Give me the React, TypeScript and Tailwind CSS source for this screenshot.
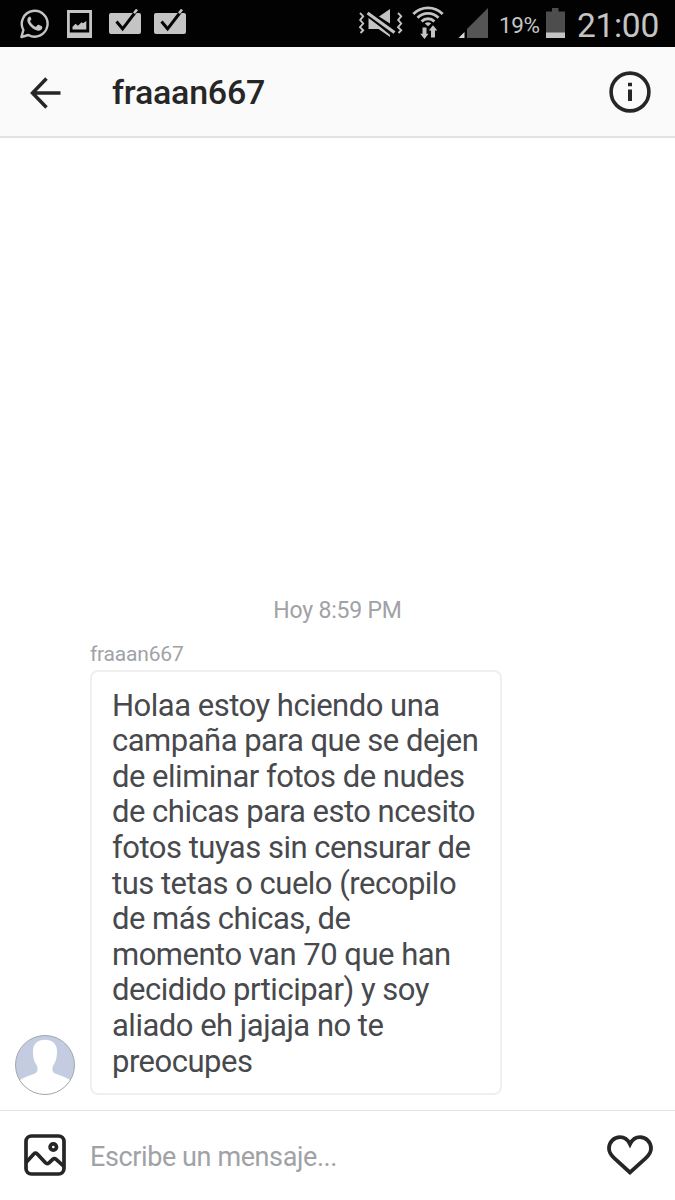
import React from 'react';

interface IconProps {
    className?: string;
}

const WhatsAppIcon: React.FC<IconProps> = ({ className }) => (
    <svg className={className} width="30" height="30" viewBox="0 0 30 30" fill="none">
        <path d="M1.4 28 L3.4 21 A12.9 12.9 0 1 1 8.4 26 Z" stroke="#c4c4c4" strokeWidth="2.4" strokeLinejoin="round" />
        <path
            d="M10.2 7.4c-.9-.2-3.2 1.4-2.9 4.1.4 4.2 6.3 9.9 10.8 10.2 2.3.1 4.3-1.5 4.2-3.2 0-.8-.3-1-1-1.4l-2.6-1.3c-.8-.3-1.1 0-1.6.7-.9 1.2-1.2 1.4-2.2.9-2-1-3.7-2.8-4.6-4.6-.3-.7 0-1 .6-1.7.6-.6.6-1 .3-1.7l-.7-1.500c-.1-.3-.1-.4-.3-.5z"
            fill="#c4c4c4"
        />
    </svg>
);

const PictureIcon: React.FC<IconProps> = ({ className }) => (
    <svg className={className} width="25" height="28" viewBox="0 0 25 28" fill="none">
        <path d="M0 0h25v28H0z M2.8 3v19.500h19.400V3z" fill="#c4c4c4" fillRule="evenodd" />
        <path d="M5.500 19.500v-2.800l3-3 2.500 2 3.500-3.500 1.500 1 3.300-2.200v8.500z" fill="#c4c4c4" />
    </svg>
);

const CheckedBoxIcon: React.FC<IconProps> = ({ className }) => (
    <svg className={className} width="33" height="26" viewBox="0 0 33 26" fill="none">
        <rect x="0" y="4" width="32" height="21" rx="2" fill="#c4c4c4" />
        <path d="M7.500 12.500L13.600 19.800L26.500 3" stroke="#050505" strokeWidth="3" />
        <path d="M25 4.200L28 .5" stroke="#c4c4c4" strokeWidth="2.600" />
    </svg>
);

const VibrateMuteIcon: React.FC<IconProps> = ({ className }) => (
    <svg className={className} width="46" height="30" viewBox="0 0 46 30" fill="none">
        <path d="M2 5l3.200 3.200L2.200 12l3 3.500L2 19.200l3.200 3L2.500 25" stroke="#c4c4c4" strokeWidth="1.900" />
        <path d="M40 5l3.200 3.200L40.200 12l3 3.500L40 19.200l3.200 3L40.500 25" stroke="#c4c4c4" strokeWidth="1.900" />
        <path d="M21 8.500L32 1v14.500z" fill="#c4c4c4" />
        <path d="M10.500 10l7.500 5.500 14 9V29l-11.500-8h-10z" fill="#c4c4c4" />
        <path d="M11 6.500L35 26" stroke="#050505" strokeWidth="5" />
        <path d="M9.500 5L36.500 24.500" stroke="#c4c4c4" strokeWidth="3.200" />
    </svg>
);

const WifiIcon: React.FC<IconProps> = ({ className }) => (
    <svg className={className} width="32" height="34" viewBox="0 0 32 34" fill="none">
        <g stroke="#c4c4c4" strokeWidth="2.800">
            <path d="M1.300 8a20.500 20.500 0 0 1 29.400 0" />
            <path d="M5.500 11.800a14.800 14.800 0 0 1 21 0" />
            <path d="M9.600 15.400a9.100 9.100 0 0 1 12.800 0" />
        </g>
        <path d="M12.800 17.600a4.500 4.500 0 0 1 6.400 0L16 20.200z" fill="#c4c4c4" />
        <path d="M10.500 21.500h4v6.300h2l-4 5.200-4.300-5.200h2.300z" fill="#c4c4c4" />
        <path d="M21 19.300l4.300 5.200h-2.300v7h-4v-7h-2.200z" fill="#c4c4c4" />
    </svg>
);

const SignalIcon: React.FC<IconProps> = ({ className }) => (
    <svg className={className} width="31" height="30" viewBox="0 0 31 30">
        <path d="M30 0v30H9V21z" fill="#555555" />
        <path d="M6.500 24v6H.5z" fill="#d8d8d8" />
    </svg>
);

const BatteryIcon: React.FC<IconProps> = ({ className }) => (
    <svg className={className} width="19" height="30" viewBox="0 0 19 30">
        <path d="M6 0h6.500v3.500H19V25H0V3.500h6z" fill="#4d4d4d" />
        <rect y="24.500" width="19" height="5.500" fill="#c4c4c4" />
    </svg>
);

const BackIcon: React.FC = () => (
    <svg className="mt-[2px]" width="32" height="32" viewBox="0 0 32 32" fill="none" stroke="#262626" strokeWidth="3.500">
        <path d="M30.500 16H3M16.500 1.500L2.500 16L16.500 30.500" />
    </svg>
);

const InfoIcon: React.FC = () => (
    <svg width="42" height="42" viewBox="0 0 42 42" fill="none">
        <circle cx="21" cy="21" r="18.900" stroke="#262626" strokeWidth="3.600" />
        <path d="M19 11.800h4v3.500h-4zM19 18.500h4v11.500h-4z" fill="#262626" />
    </svg>
);

const Avatar: React.FC<IconProps> = ({ className }) => (
    <svg className={className} width="60" height="60" viewBox="0 0 60 60">
        <defs>
            <clipPath id="avatar">
                <circle cx="30" cy="30" r="29.500" />
            </clipPath>
        </defs>
        <g clipPath="url(#avatar)">
            <rect width="60" height="60" fill="#c3cce0" />
            <path
                d="M30 4.800c-7.500 0-12 4.300-12 11.200 0 6 .8 9.500 3.200 13.500 1.800 2.500 2 7-.4 8.500C17 40.300 9.500 41 4 46V60h52V46c-5.500-5-13-5.700-16.800-8-2.400-1.500-2.200-6-.4-8.500 2.400-4 3.200-7.500 3.200-13.500 0-6.900-4.500-11.200-12-11.200z"
                fill="#ffffff"
            />
        </g>
        <circle cx="30" cy="30" r="29.500" fill="none" stroke="#a3a6ae" strokeWidth="1" />
    </svg>
);

const GalleryIcon: React.FC = () => (
    <svg width="42" height="42" viewBox="0 0 42 42" fill="none" stroke="#262626" strokeWidth="3.700">
        <rect x="2" y="2" width="38" height="38" rx="5.500" />
        <circle cx="29.300" cy="13" r="3.200" />
        <path d="M2 28.500L9.800 20q1.700-1.700 3.500 0L21.500 28.800q1.700 1.700 3.500 0l3.700-3.500q1.700-1.500 3.500 0L40 32.500" />
    </svg>
);

const HeartIcon: React.FC = () => (
    <svg width="46" height="42" viewBox="0 0 46 42" fill="none" stroke="#262626" strokeWidth="3.800">
        <path d="M23 38.500L7.500 24.300C3.800 21 2 18.400 2 14.500 2 8 7 3.200 13 3.200c4.500 0 8 2.800 10 7 2-4.200 5.500-7 10-7 6 0 11 4.800 11 11.300 0 3.900-1.800 6.500-5.500 9.800z" />
    </svg>
);

const messageLines = [
    'Holaa estoy hciendo una',
    'campaña para que se dejen',
    'de eliminar fotos de nudes',
    'de chicas para esto ncesito',
    'fotos tuyas sin censurar de',
    'tus tetas o cuelo (recopilo',
    'de más chicas, de',
    'momento van 70 que han',
    'decidido prticipar) y soy',
    'aliado eh jajaja no te',
    'preocupes',
];

const StatusBar: React.FC = () => (
    <div className="h-[47px] shrink-0 bg-[#020202] flex items-start pl-5 pr-4 text-[#c4c4c4]">
        <WhatsAppIcon className="mt-[9px]" />
        <PictureIcon className="mt-[10px] ml-[17px]" />
        <CheckedBoxIcon className="mt-[9px] ml-[17px]" />
        <CheckedBoxIcon className="mt-[9px] ml-3" />
        <div className="ml-auto flex items-start">
            <VibrateMuteIcon className="mt-2" />
            <WifiIcon className="mt-[6px] ml-2" />
            <SignalIcon className="mt-2 ml-[14px]" />
            <span className="w-[46px] pl-[10px] mt-[10px] text-[22.5px] leading-[30px] tracking-[-0.4px] whitespace-nowrap">19%</span>
            <BatteryIcon className="mt-2 ml-[11px]" />
            <span className="w-[82px] ml-3 mt-[5px] text-[33.5px] leading-[42px] tracking-[-0.3px] whitespace-nowrap">21:00</span>
        </div>
    </div>
);

const App: React.FC = () => {
    return (
        <div className="w-[675px] h-[1200px] overflow-hidden bg-white flex flex-col font-['Roboto',sans-serif]">
            <StatusBar />

            {/* Header */}
            <header className="h-[91px] shrink-0 bg-[#fafafa] border-b-2 border-[#e2e2e2] flex items-center pl-[30px] pr-6">
                <BackIcon />
                <h1 className="ml-[50px] text-[34px] leading-[40px] tracking-[-0.25px] font-medium text-[#262626]">fraaan667</h1>
                <div className="ml-auto">
                    <InfoIcon />
                </div>
            </header>

            {/* Conversation */}
            <main className="flex-1 min-h-0 flex flex-col justify-end pb-[15px]">
                <p className="text-center text-[23px] leading-[28px] tracking-[-0.2px] text-[#a0a2a6]">Hoy 8:59 PM</p>
                <p className="mt-[16px] mb-[3px] ml-[90px] text-[21px] leading-[26px] tracking-[-0.2px] text-[#a0a2a6]">fraaan667</p>
                <div className="flex items-end pl-[15px]">
                    <Avatar />
                    <div className="ml-[15px] w-[412px] h-[425px] border-2 border-[#efefef] rounded-[8px] pl-5 pt-[15.6px]">
                        {messageLines.map((line) => (
                            <p key={line} className="text-[31px] leading-[35.6px] tracking-[-0.5px] text-[#47494d] whitespace-nowrap">
                                {line}
                            </p>
                        ))}
                    </div>
                </div>
            </main>

            {/* Composer */}
            <footer className="h-[90px] shrink-0 border-t border-[#e4e4e4] flex items-center pl-6 pr-[22px] pb-px">
                <GalleryIcon />
                <span className="ml-6 mt-[3px] text-[27px] leading-[32px] tracking-[-0.4px] text-[#a0a2a6]">Escribe un mensaje...</span>
                <div className="ml-auto">
                    <HeartIcon />
                </div>
            </footer>
        </div>
    );
};

export default App;
